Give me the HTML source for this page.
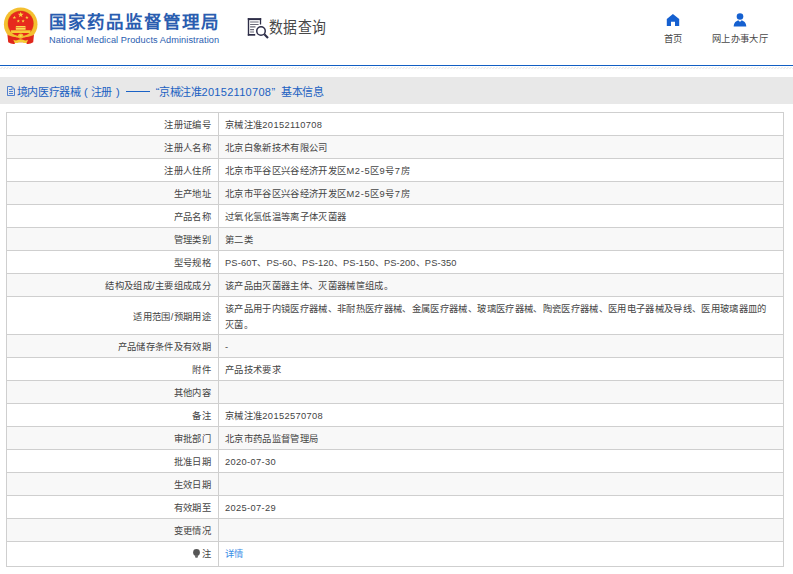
<!DOCTYPE html>
<html lang="zh-CN">
<head>
<meta charset="utf-8">
<title>国家药品监督管理局 数据查询</title>
<style>
html,body{margin:0;padding:0;}
body{width:793px;height:574px;overflow:hidden;background:#fff;font-family:"Liberation Sans",sans-serif;font-size:9.3px;color:#444;position:relative;}
.abs{position:absolute;white-space:nowrap;display:block;}
#emblem{left:0;top:0;width:44px;height:48px;}
#cn-title{left:49px;top:9.5px;font-size:17.5px;line-height:24px;font-weight:bold;color:#2a5db0;letter-spacing:2px;}
#en-title{left:49px;top:34px;font-size:9.2px;letter-spacing:.08px;line-height:12px;color:#2a5db0;}
#q-icon{left:247px;top:17px;width:23px;height:23px;}
#q-text{left:269px;top:16.5px;font-size:15.5px;line-height:22px;color:#484848;transform:scaleX(0.895);transform-origin:0 0;}
.nav-t{font-size:9.3px;line-height:12px;color:#484848;text-align:center;letter-spacing:.3px;}
#blue-line{left:0;top:65px;width:793px;height:1px;background:#125fc3;}
#hatch{left:0;top:67px;width:793px;height:2px;}
#bar{left:0;top:77px;width:793px;height:27px;background:#e8e8e8;}
#bar-t{left:0;top:84.5px;width:400px;height:14px;font-size:11px;line-height:14px;color:#1a60c2;}
.b{position:absolute;top:0;white-space:nowrap;letter-spacing:-.3px;}
#bar-i{left:7px;top:86px;width:8px;height:10px;}
table{position:absolute;left:6px;top:112px;width:778px;border-collapse:collapse;border-spacing:0;table-layout:fixed;font-size:9.3px;color:#444;font-family:"Liberation Sans",sans-serif;}
td{border:1px solid #cfcfcf;height:22px;padding:4px 6px 0 6px;letter-spacing:.34px;line-height:15.5px;vertical-align:middle;box-sizing:border-box;}
td.l{width:212px;text-align:right;padding-right:7px;}
td.v{text-align:left;}
tr.g td{background:#f8f8f8;}
tr{height:23px;}
a{color:#3b8ee6;text-decoration:none;}
</style>
</head>
<body>
<svg id="emblem" class="abs" viewBox="0 0 44 48">
  <circle cx="20.700" cy="24.200" r="16.800" fill="#f4bf30"/>
  <circle cx="20.700" cy="23.600" r="13.100" fill="#d9901c"/>
  <circle cx="20.700" cy="23.600" r="12.700" fill="#e7291d"/>
  <path d="M20.700 11.800l.75 2.050h2.150l-1.750 1.300.65 2.100-1.800-1.250-1.800 1.250.65-2.100-1.750-1.300h2.150z" fill="#f8d640"/>
  <path id="st" d="M0-1.300l.35.850h.9l-.72.550.27.900-.8-.52-.8.520.27-.9-.72-.55h.9z" fill="#f8d640" transform="translate(14.400 17.600) scale(1.35)"/>
  <path d="M0-1.300l.35.850h.9l-.72.550.27.900-.8-.52-.8.520.27-.9-.72-.55h.9z" fill="#f8d640" transform="translate(26.900 17.600) scale(1.35)"/>
  <path d="M0-1.300l.35.850h.9l-.72.550.27.900-.8-.52-.8.520.27-.9-.72-.55h.9z" fill="#f8d640" transform="translate(18.300 21.200) scale(1.35)"/>
  <path d="M0-1.300l.35.850h.9l-.72.550.27.900-.8-.52-.8.520.27-.9-.72-.55h.9z" fill="#f8d640" transform="translate(23.100 21.200) scale(1.35)"/>
  <path d="M16.300 26h8.800l.9 1.300h-10.600zM15.800 27.800h9.800v2h-9.800z" fill="#f9dc52"/>
  <path d="M10.800 30.200h19.900l-.5 2.700h-18.900z" fill="#f6cd38"/>
  <path d="M7.400 34.600C12 38.600 29.400 38.600 34 34.600L33.200 42.300Q30 44.300 27 43.900L25.600 42.200H15.800L14.400 43.900Q11.400 44.300 8.200 42.300Z" fill="#e0271c"/>
  <path d="M12.500 34.300q8.200 4.200 16.400 0l.5 1.300q-8.700 4.400-17.400 0z" fill="#f4bf30"/>
  <circle cx="20.700" cy="36.100" r="2.700" fill="#f4bf30"/>
  <circle cx="20.700" cy="36.100" r="1.100" fill="#f9dc52"/>
  <path d="M13.300 39.700q1.800 1 3.700.6l1.300-.6q2.400-1.100 4.800 0l1.300.6q1.900.4 3.700-.6l-1.300 3q-1.800.7-3.200.2l-.9-.6h-4l-.9.600q-1.400.5-3.200-.2z" fill="#f6cd38"/>
</svg>
<div id="cn-title" class="abs">国家药品监督管理局</div>
<div id="en-title" class="abs">National Medical Products Administration</div>

<svg id="q-icon" class="abs" viewBox="0 0 23 23" fill="none">
  <path d="M1.500 1.100v17.500" stroke="#2e2e48" stroke-width="1.400"/>
  <path d="M.8 2.100h13.400" stroke="#2e2e48" stroke-width="2"/>
  <path d="M13.500 1.100v6.400" stroke="#2e2e48" stroke-width="1.300"/>
  <path d="M.8 17.850h7.400" stroke="#2e2e48" stroke-width="1.700"/>
  <path d="M3.100 5h8.500M3.100 7.500h8.500M3.100 9.900h5.400M3.100 12.600h3.900M3.100 15h3.900" stroke="#6a6a78" stroke-width="1.100"/>
  <circle cx="14" cy="14" r="4.250" stroke="#2e2e48" stroke-width="1.500" fill="#fff"/>
  <path d="M17.300 17.300l3.700 3.700" stroke="#2e2e48" stroke-width="2.100"/>
</svg>
<div id="q-text" class="abs">数据查询</div>

<svg class="abs" style="left:666px;top:13px;width:14px;height:14px" viewBox="0 0 14 14">
  <path d="M6.900 1L.8 6.100v7h4.200V8.800h4v4.300h4.200v-7z" fill="#1560d0"/>
</svg>
<div class="abs nav-t" style="left:653px;top:33px;width:40px">首页</div>
<svg class="abs" style="left:733px;top:13px;width:14px;height:14px" viewBox="0 0 14 14">
  <circle cx="7" cy="3.500" r="3.300" fill="#1560d0"/>
  <path d="M.7 13.400c0-3.800 2.600-6 5-6l1.300 1.600 1.300-1.600c2.400 0 5 2.200 5 6z" fill="#1560d0"/>
</svg>
<div class="abs nav-t" style="left:700px;top:33px;width:80px">网上办事大厅</div>

<div id="blue-line" class="abs"></div>
<svg id="hatch" class="abs" viewBox="0 0 793 2" preserveAspectRatio="none">
  <defs><pattern id="hp" width="3" height="2" patternUnits="userSpaceOnUse"><path d="M0 2.500l3-3" stroke="#dedede" stroke-width=".9"/></pattern></defs>
  <rect width="793" height="2" fill="url(#hp)"/>
</svg>
<div id="bar" class="abs"></div>
<svg id="bar-i" class="abs" viewBox="0 0 8 10" fill="none" stroke="#3f74cc" stroke-width=".9">
  <path d="M.5.500h4.500l2.500 2.500v6.500h-7z"/>
  <path d="M5 .500v2.500h2.500" stroke-width=".7"/>
  <path d="M2 3.500h2.500M2 5.500h4M2 7.500h4" shape-rendering="crispEdges"/>
</svg>
<div id="bar-t" class="abs">
<span class="b" style="left:16.500px">境内医疗器械</span>
<span class="b" style="left:84px;letter-spacing:0">(</span>
<span class="b" style="left:90.500px">注册</span>
<span class="b" style="left:116px;letter-spacing:0">)</span>
<span class="b" style="left:126px;top:6px;width:23.700px;height:1.700px;background:#1a62c6;color:transparent;overflow:hidden;line-height:1px;letter-spacing:0">——</span>
<span class="b" style="left:155.700px;letter-spacing:0">“</span>
<span class="b" style="left:159px">京械注准</span>
<span class="b" style="left:201.500px;letter-spacing:.3px">20152110708</span>
<span class="b" style="left:271.500px;letter-spacing:0">”</span>
<span class="b" style="left:281px">基本信息</span>
</div>

<table>
<tr><td class="l">注册证编号</td><td class="v">京械注准20152110708</td></tr>
<tr class="g"><td class="l">注册人名称</td><td class="v">北京白象新技术有限公司</td></tr>
<tr><td class="l">注册人住所</td><td class="v">北京市平谷区兴谷经济开发区<span style="letter-spacing:.65px">M2-5</span>区<span style="letter-spacing:.65px">9</span>号<span style="letter-spacing:.65px">7</span>房</td></tr>
<tr class="g"><td class="l">生产地址</td><td class="v">北京市平谷区兴谷经济开发区<span style="letter-spacing:.65px">M2-5</span>区<span style="letter-spacing:.65px">9</span>号<span style="letter-spacing:.65px">7</span>房</td></tr>
<tr><td class="l">产品名称</td><td class="v">过氧化氢低温等离子体灭菌器</td></tr>
<tr class="g"><td class="l">管理类别</td><td class="v">第二类</td></tr>
<tr><td class="l">型号规格</td><td class="v" style="letter-spacing:.13px">PS-60T、PS-60、PS-120、PS-150、PS-200、PS-350</td></tr>
<tr class="g"><td class="l">结构及组成/主要组成成分</td><td class="v">该产品由灭菌器主体、灭菌器械筐组成。</td></tr>
<tr style="height:38px"><td class="l">适用范围/预期用途</td><td class="v">该产品用于内镜医疗器械、非耐热医疗器械、金属医疗器械、玻璃医疗器械、陶瓷医疗器械、医用电子器械及导线、医用玻璃器皿的<br>灭菌。</td></tr>
<tr class="g"><td class="l">产品储存条件及有效期</td><td class="v">-</td></tr>
<tr><td class="l">附件</td><td class="v">产品技术要求</td></tr>
<tr class="g"><td class="l">其他内容</td><td class="v"></td></tr>
<tr><td class="l">备注</td><td class="v">京械注准20152570708</td></tr>
<tr class="g"><td class="l">审批部门</td><td class="v">北京市药品监督管理局</td></tr>
<tr><td class="l">批准日期</td><td class="v">2020-07-30</td></tr>
<tr class="g"><td class="l">生效日期</td><td class="v"></td></tr>
<tr><td class="l">有效期至</td><td class="v">2025-07-29</td></tr>
<tr class="g"><td class="l">变更情况</td><td class="v"></td></tr>
<tr style="height:25px"><td class="l" style="padding-top:2px"><svg style="width:7px;height:9px;vertical-align:-.8px;margin-right:1.500px" viewBox="0 0 7 9"><circle cx="3.500" cy="3.500" r="3.400" fill="#555"/><path d="M2.100 6h2.800v2.200l-.7.600h-1.400l-.7-.6z" fill="#666"/></svg>注</td><td class="v" style="padding-top:2px"><a>详情</a></td></tr>
</table>
</body>
</html>
